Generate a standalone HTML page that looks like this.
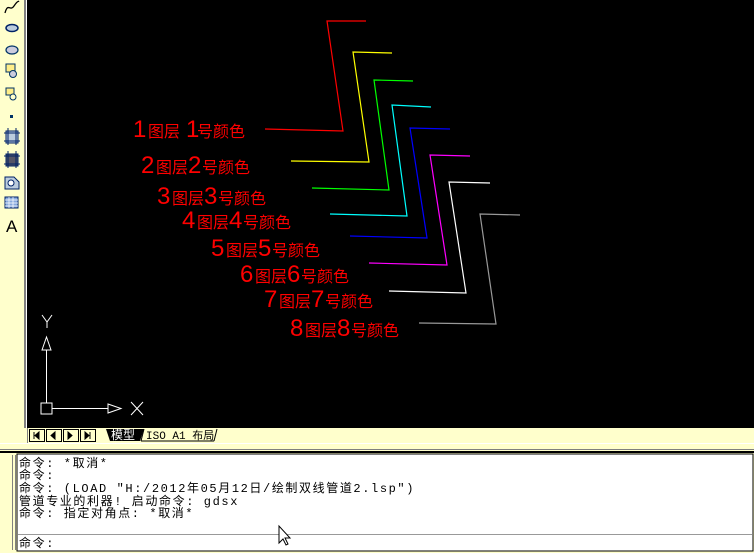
<!DOCTYPE html>
<html><head><meta charset="utf-8"><style>
html,body{margin:0;padding:0;width:754px;height:553px;overflow:hidden;background:#ffffcc;font-family:"Liberation Sans","Noto Sans CJK SC",sans-serif;}
.cmd{position:absolute;left:19px;font-family:"Liberation Mono","Noto Sans CJK SC",monospace;font-size:12px;line-height:12px;letter-spacing:1.6px;color:#000;white-space:pre;}
</style></head><body>
<svg width="754" height="553" style="position:absolute;left:0;top:0" xmlns="http://www.w3.org/2000/svg">
<rect x="0" y="0" width="754" height="553" fill="#ffffcc"/>
<rect x="24" y="0" width="2" height="428" fill="#808080"/>
<rect x="26" y="0" width="1" height="428" fill="#fff"/>
<rect x="27" y="0" width="727" height="428" fill="#000"/>
<path d="M5 13 C8 2,10 12,14 6 S18 2,19 1" stroke="#000" fill="none" stroke-width="1.3"/>
<ellipse cx="12" cy="28" rx="6" ry="3.5" fill="#bcd" stroke="#026" stroke-width="1.5"/>
<ellipse cx="12" cy="50" rx="6" ry="4" fill="#ccd" stroke="#036" stroke-width="1.2"/>
<rect x="6" y="64" width="9" height="8" fill="#fe8" stroke="#036"/><circle cx="13" cy="74" r="3.5" fill="#ccd" stroke="#036"/>
<rect x="6" y="88" width="8" height="7" fill="#fe8" stroke="#036"/><circle cx="13" cy="97" r="3" fill="#ffc" stroke="#036"/>
<rect x="10" y="115" width="3" height="3" fill="#036"/>
<rect x="6" y="131" width="12" height="12" fill="#bcd" stroke="#026"/><path d="M4 133h16M4 141h16M8 128v17M16 128v17" stroke="#026"/>
<rect x="6" y="154" width="12" height="12" fill="#556" stroke="#026"/><path d="M4 156h16M4 164h16M8 151v17M16 151v17" stroke="#026"/>
<path d="M5 177h9l5 5v7H5z" fill="#bcd" stroke="#026"/><circle cx="11" cy="183" r="3" fill="#fff" stroke="#026"/>
<rect x="5" y="197" width="13" height="11" fill="#8ad" stroke="#026"/><path d="M5 200h13M5 203h13M5 206h13M9 197v11M13 197v11" stroke="#fff" stroke-width=".7"/>
<text x="6" y="232" font-size="17" font-family="Liberation Sans" fill="#000">A</text>
<g fill="none" stroke-width="1.2">
<polyline points="265,129 343,131 327,21 366,21" stroke="#ff0000"/>
<polyline points="291,161 369,162 353,52 392,53" stroke="#ffff00"/>
<polyline points="312,188 389,190 374,80 413,81" stroke="#00ff00"/>
<polyline points="330,214 407,216 392,105 431,107" stroke="#00ffff"/>
<polyline points="350,236 427,238 410,128 450,129" stroke="#0000ff"/>
<polyline points="369,263 447,265 430,155 470,156" stroke="#ff00ff"/>
<polyline points="389,291 466,293 449,182 490,183" stroke="#ffffff"/>
<polyline points="419,323 496,324 480,214 520,215" stroke="#999999"/>
</g>
<g fill="#ff0000" font-family="Liberation Sans,Noto Sans CJK SC,sans-serif">
<g transform="translate(133,137)"><text font-size="24">1</text><text x="15" font-size="16">图层</text><text x="53" font-size="24">1</text><text x="64" font-size="16">号颜色</text></g>
<g transform="translate(141,173)"><text font-size="24">2</text><text x="15" font-size="16">图层</text><text x="47" font-size="24">2</text><text x="61" font-size="16">号颜色</text></g>
<g transform="translate(157,204)"><text font-size="24">3</text><text x="15" font-size="16">图层</text><text x="47" font-size="24">3</text><text x="61" font-size="16">号颜色</text></g>
<g transform="translate(182,228)"><text font-size="24">4</text><text x="15" font-size="16">图层</text><text x="47" font-size="24">4</text><text x="61" font-size="16">号颜色</text></g>
<g transform="translate(211,256)"><text font-size="24">5</text><text x="15" font-size="16">图层</text><text x="47" font-size="24">5</text><text x="61" font-size="16">号颜色</text></g>
<g transform="translate(240,282)"><text font-size="24">6</text><text x="15" font-size="16">图层</text><text x="47" font-size="24">6</text><text x="61" font-size="16">号颜色</text></g>
<g transform="translate(264,307)"><text font-size="24">7</text><text x="15" font-size="16">图层</text><text x="47" font-size="24">7</text><text x="61" font-size="16">号颜色</text></g>
<g transform="translate(290,336)"><text font-size="24">8</text><text x="15" font-size="16">图层</text><text x="47" font-size="24">8</text><text x="61" font-size="16">号颜色</text></g>
</g>
<g stroke="#fff" fill="none" stroke-width="1">
<rect x="41" y="403" width="11" height="11"/>
<line x1="46.5" y1="403" x2="46.5" y2="350"/>
<path d="M42 350 L46.5 337 L51 350 Z"/>
<line x1="52" y1="408.5" x2="108" y2="408.5"/>
<path d="M108 404 L121 408.5 L108 413 Z"/>
<path d="M42 315 L47 322 L52 315 M47 322 V328"/>
<path d="M131 402 L143 415 M143 402 L131 415"/>
</g>
<rect x="27" y="428" width="727" height="15" fill="#ffffcc"/>
<rect x="27" y="428" width="1" height="15" fill="#808080"/>
<g stroke="#000" fill="#ffffcc">
<rect x="29.5" y="429.5" width="15" height="12"/><rect x="46.5" y="429.5" width="15" height="12"/><rect x="63.5" y="429.5" width="15" height="12"/><rect x="80.5" y="429.5" width="15" height="12"/>
</g>
<path d="M34 432v7M35 435.5l4-3.5v7z M55 432v7l-4-3.5z M68 432l4 3.5-4 3.5z M85 432l4 3.5-4 3.5z M90 432v7" fill="#000" stroke="#000"/>
<path d="M106 429 L110 441 H140 L144 429 Z" fill="#000"/>
<text x="111" y="439" font-size="12" fill="#fff" font-family="Noto Sans CJK SC,sans-serif">模型</text>
<path d="M144 429 L141 441 M217 429 L214 441 M141 441 H214" stroke="#000" fill="none"/>
<text x="146" y="439" font-size="11" fill="#000" font-family="Liberation Mono,Noto Sans CJK SC,monospace">ISO A1 布局</text>
<rect x="0" y="443" width="754" height="1" fill="#fff"/>
<rect x="0" y="449" width="754" height="1" fill="#808080"/>
<rect x="0" y="451" width="754" height="2" fill="#000"/>
<rect x="12" y="455" width="1" height="95" fill="#808080"/><rect x="15" y="455" width="1" height="95" fill="#808080"/>
<rect x="17" y="454" width="736" height="97" fill="#fff" stroke="#000"/>
<rect x="18" y="534" width="734" height="1" fill="#999"/>
<path d="M279 526 v17 l4-4 3 6 2-1-3-6 h5z" fill="#fff" stroke="#000"/>
</svg>
<div class="cmd" style="top:458px">命令: *取消*</div>
<div class="cmd" style="top:470px">命令:</div>
<div class="cmd" style="top:483px">命令: (LOAD "H:/2012年05月12日/绘制双线管道2.lsp")</div>
<div class="cmd" style="top:496px">管道专业的利器! 启动命令: gdsx</div>
<div class="cmd" style="top:508px">命令: 指定对角点: *取消*</div>
<div class="cmd" style="top:538px">命令:</div>
</body></html>
